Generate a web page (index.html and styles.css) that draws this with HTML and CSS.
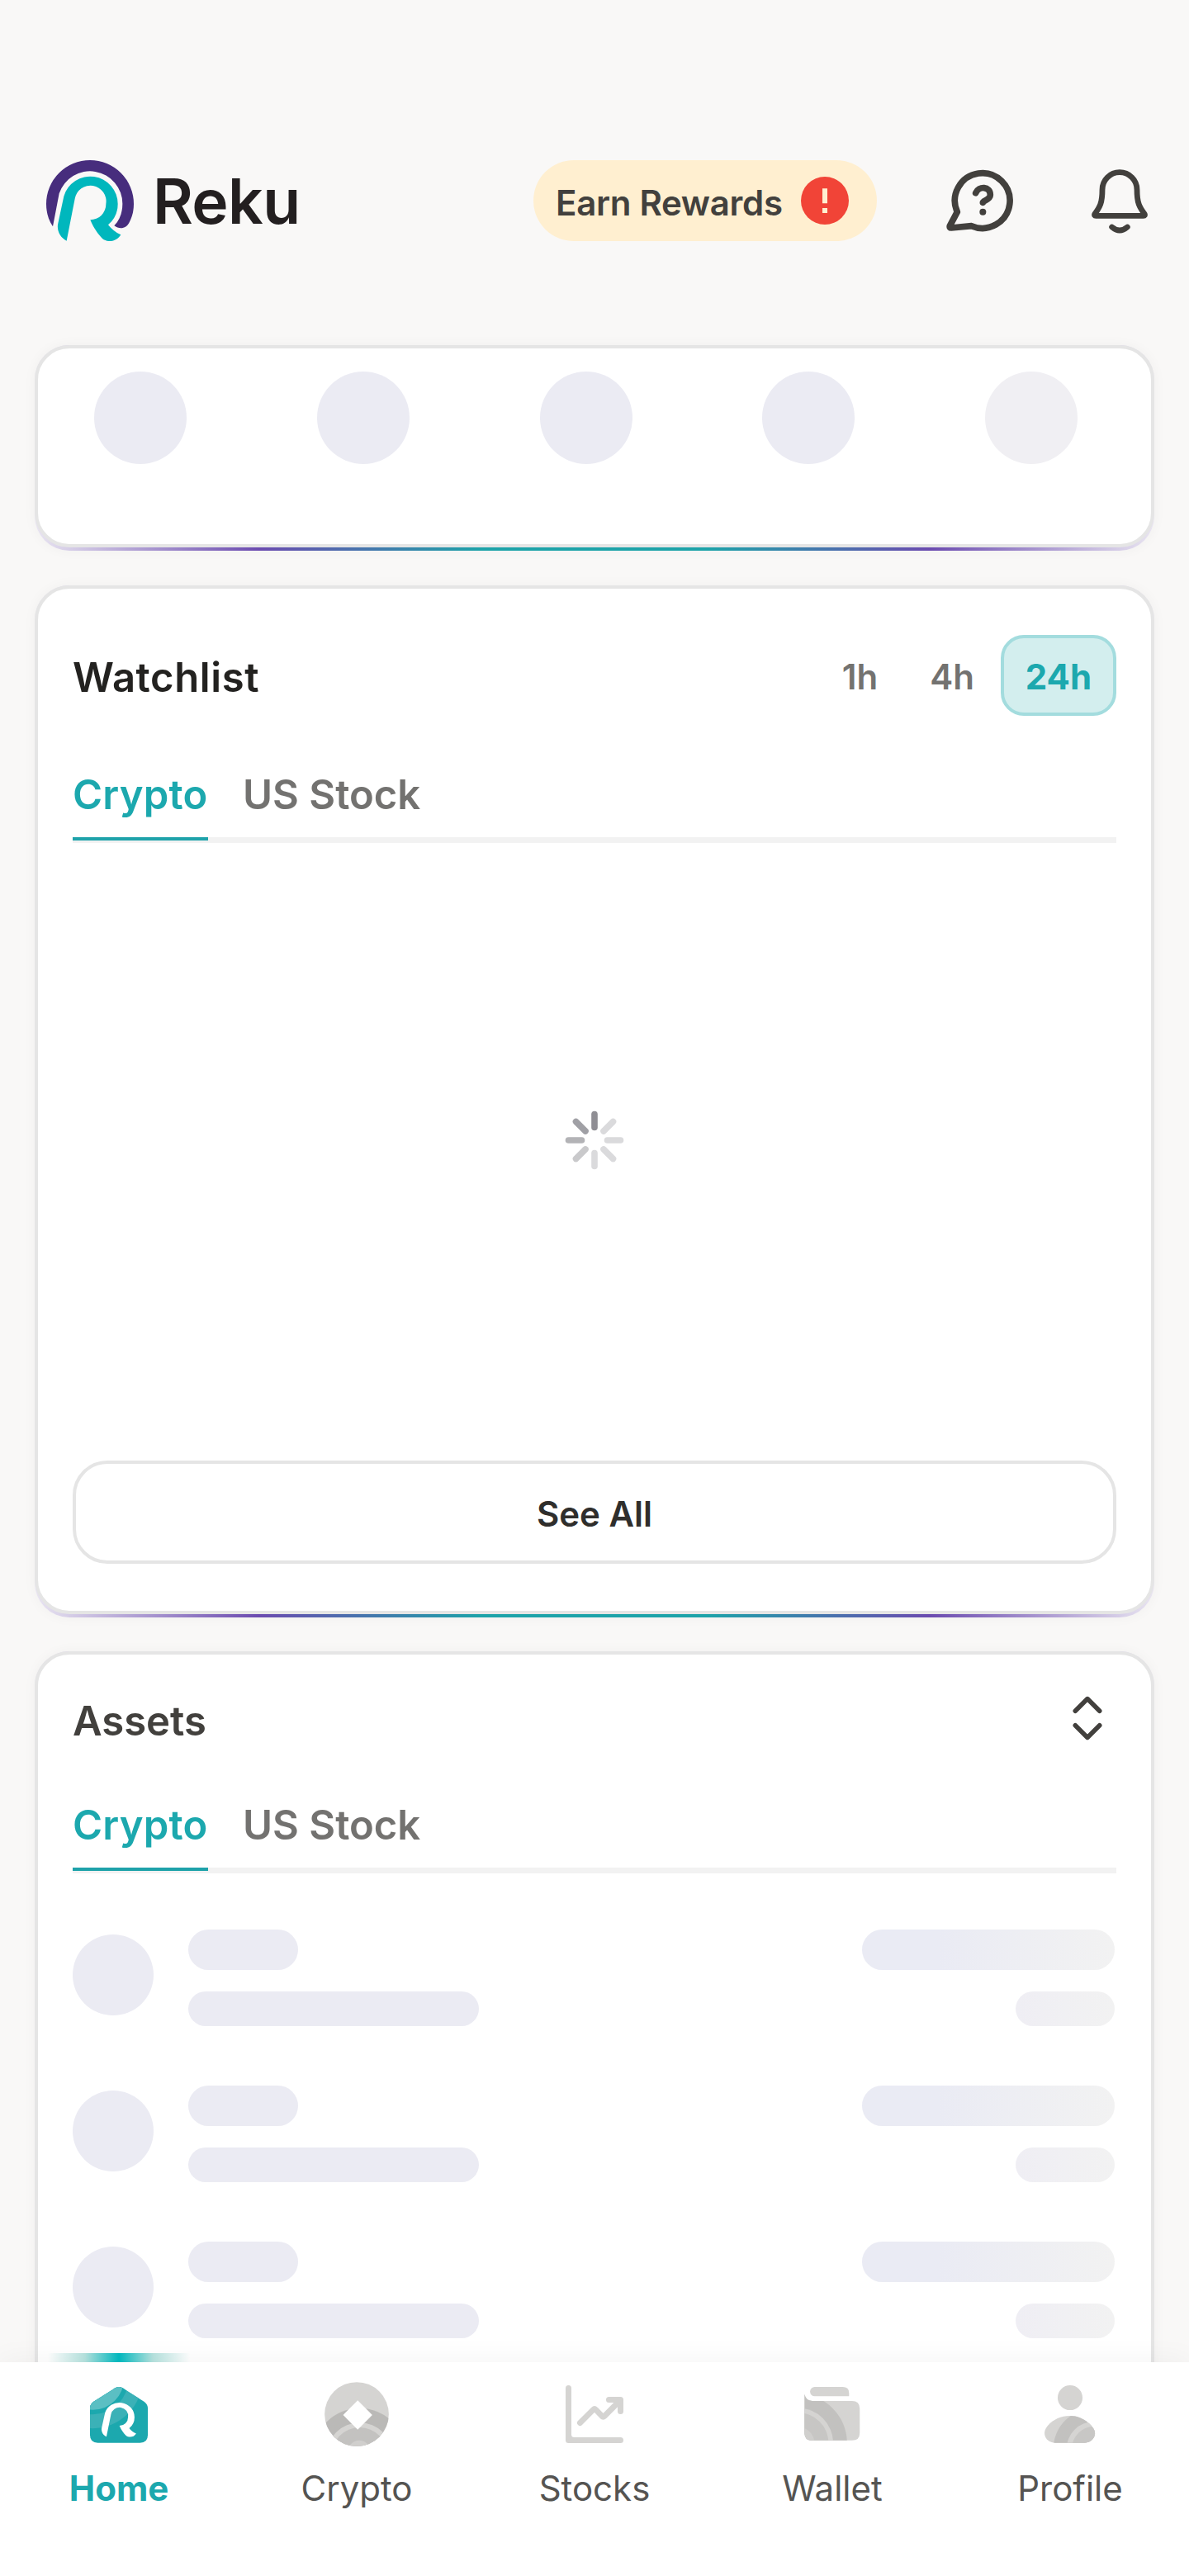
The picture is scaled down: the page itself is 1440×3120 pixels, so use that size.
FILE: index.html
```html
<!DOCTYPE html>
<html lang="en">
<head>
<meta charset="utf-8">
<title>Reku</title>
<link rel="stylesheet" href="styles.css">
</head>
<body>
<div class="app">
  <main class="screen">
    <header class="topbar">
      <div class="brand">
        <svg class="brand-mark" viewBox="78 72 318 294">
          <path fill="#472d7d" d="M102 313C85 288 78 260 78 231A159 159 0 0 1 396 231C396 255 391 277 380 298C370 320 345 326 325 310C345 290 355 262 355 231A118 118 0 0 0 125 193Z"/>
          <path fill="#00b7bd" d="M152 365L182 212A57 57 0 0 1 295 231A57 57 0 0 1 238 289C252 322 266 340 282 357C300 371 332 371 349 343C330 335 314 322 303 307A100 100 0 0 0 338 231A100 100 0 0 0 142 203L120 306C117 332 130 353 152 365Z"/>
        </svg>
        <span class="brand-name">Reku</span>
      </div>
      <div class="actions">
        <div class="rewards"><span class="rewards-label">Earn Rewards</span>
          <svg class="alert" viewBox="0 0 58 58"><circle cx="29" cy="29" r="29" fill="#f14437"/><path fill="#ffefd0" d="M26 14.3h6v18h-6zM26 38h6v6h-6z"/></svg>
        </div>
        <svg class="icon help" viewBox="135 90 252 252" fill="none" stroke="#42403d" stroke-width="23" stroke-linecap="round" stroke-linejoin="round">
          <path d="M230 308A100 100 0 1 0 178 257L151 308Q149 315 156 315Z"/>
          <path d="M245 188C256 162 298 163 298 195C298 213 271 216 271 223"/>
          <circle cx="271" cy="257" r="12" fill="#42403d" stroke="none"/>
        </svg>
        <svg class="icon bell" viewBox="642 90 252 252" fill="none" stroke="#42403d" stroke-width="20.5" stroke-linecap="round" stroke-linejoin="round">
          <path d="M768 113A63 63 0 0 0 705 176C705 225 696 239 678 264Q674 271 682 271H854Q862 271 858 264C840 239 831 225 831 176A63 63 0 0 0 768 113Z"/>
          <path d="M740 312Q768 336 796 312"/>
        </svg>
      </div>
    </header>

    <section class="frame">
      <div class="card shortcuts"><i></i><i></i><i></i><i></i><i class="fade"></i></div>
    </section>

    <section class="frame">
      <div class="card watchlist">
        <div class="card-head">
          <h2 class="title wide">Watchlist</h2>
          <div class="ranges"><span class="range r1">1h</span><span class="range r4">4h</span><span class="range active">24h</span></div>
        </div>
        <nav class="tabs"><span class="tab on">Crypto</span><span class="tab">US Stock</span></nav>
        <div class="loading">
          <svg class="spinner" viewBox="-36 -36 72 72" stroke-width="7.6" stroke-linecap="round">
            <path stroke="#8f8e94" d="M0-31.5V-15.5"/>
            <path stroke="#dadadc" d="M22.5-22.5L11-11"/>
            <path stroke="#dadadc" d="M31.5 0H15.5"/>
            <path stroke="#dadadc" d="M22.5 22.5L11 11"/>
            <path stroke="#dadadc" d="M0 31.5V15.5"/>
            <path stroke="#c9c9cb" d="M-22.5 22.5L-11 11"/>
            <path stroke="#b3b3b6" d="M-31.5 0H-15.5"/>
            <path stroke="#a0a0a5" d="M-22.5-22.5L-11-11"/>
          </svg>
        </div>
        <div class="see-all">See All</div>
      </div>
    </section>

    <section class="frame">
      <div class="card assets">
        <div class="card-head">
          <h2 class="title soft">Assets</h2>
          <svg class="sort" viewBox="0 0 70 70" fill="none" stroke="#42403d" stroke-width="5.6" stroke-linecap="round" stroke-linejoin="round"><path d="M20.3 26.3L35 11.6L49.7 26.3M20.3 43.7L35 58.4L49.7 43.7"/></svg>
        </div>
        <nav class="tabs"><span class="tab on">Crypto</span><span class="tab">US Stock</span></nav>
        <div class="rows">
          <div class="row"><i class="coin"></i><div class="left"><i class="bar a"></i><i class="bar b"></i></div><div class="right"><i class="bar c"></i><i class="bar d"></i></div></div>
          <div class="row"><i class="coin"></i><div class="left"><i class="bar a"></i><i class="bar b"></i></div><div class="right"><i class="bar c"></i><i class="bar d"></i></div></div>
          <div class="row"><i class="coin"></i><div class="left"><i class="bar a"></i><i class="bar b"></i></div><div class="right"><i class="bar c"></i><i class="bar d"></i></div></div>
        </div>
      </div>
    </section>
  </main>

  <footer class="bottom-nav">
    <div class="nav-item current">
      <svg class="nav-icon" viewBox="0 0 24 24">
        <clipPath id="house"><path d="M2 10Q2 8.6 3.2 7.7L10.8 2.9Q12 2.2 13.2 2.9L20.8 7.7Q22 8.6 22 10V19.2Q22 21.9 19.3 21.9H4.7Q2 21.9 2 19.2Z"/></clipPath>
        <g clip-path="url(#house)"><path fill="#1ca8ae" d="M0 0h24v24H0z"/><circle cx="3" cy="-.2" r="17.1" fill="#3bb1b7"/><circle cx="3" cy="-.2" r="12.3" fill="#1ca8ae"/><circle cx="3" cy="-.2" r="10.7" fill="#5bbfc3"/></g>
        <path fill="#fff" transform="translate(-.24 1.385) scale(.0522 .0505)" d="M152 365L182 212A57 57 0 0 1 295 231A57 57 0 0 1 238 289C252 322 266 340 282 357C300 371 332 371 349 343C330 335 314 322 303 307A100 100 0 0 0 338 231A100 100 0 0 0 142 203L120 306C117 332 130 353 152 365Z"/>
      </svg>
      <span>Home</span>
    </div>
    <div class="nav-item">
      <svg class="nav-icon" viewBox="0 0 24 24">
        <clipPath id="disc"><circle cx="12" cy="12" r="11.1"/></clipPath>
        <g clip-path="url(#disc)"><path fill="#d5d4d2" d="M0 0h24v24H0z"/><circle cx="13" cy="26" r="16.1" fill="#bab9b7"/><circle cx="13" cy="26.4" r="11.5" fill="#d5d4d2"/><circle cx="13" cy="26.4" r="9.8" fill="#c3c2c0"/><circle cx="12.9" cy="25" r="3.9" fill="#d0cfcd"/></g>
        <path fill="#fff" d="M12.35 7.2L17.4 12.3L12.35 17.35L7.3 12.3Z"/>
      </svg>
      <span>Crypto</span>
    </div>
    <div class="nav-item">
      <svg class="nav-icon" viewBox="0 0 24 24" fill="none" stroke="#d5d4d2" stroke-width="2" stroke-linecap="round" stroke-linejoin="round">
        <path d="M3 3V21H21"/><path stroke="none" fill="#d5d4d2" d="M4 19Q4 20 5 20H4z"/>
        <path d="M7 15L11.6 10.4Q12 10 12.4 10.4L14.6 12.7Q15 13.1 15.4 12.7L20.8 7.3M17 7H21V11"/>
      </svg>
      <span>Stocks</span>
    </div>
    <div class="nav-item">
      <svg class="nav-icon" viewBox="0 0 24 24">
        <clipPath id="purse"><path d="M2.4 5.1Q2.8 7.4 5.1 7.4H18.8Q21.5 7.4 21.5 10.1V18.4Q21.5 21.1 18.8 21.1H5.1Q2.4 21.1 2.4 18.4Z"/></clipPath>
        <path fill="#d5d4d2" d="M5.9 2.6H15.6Q17.8 2.6 17.8 4.7V5.8H5.9A1.6 1.6 0 0 1 5.9 2.6Z"/>
        <g clip-path="url(#purse)"><path fill="#d5d4d2" d="M0 0h24v24H0z"/><circle cx="0" cy="22" r="17.1" fill="#c2c1bf"/><circle cx=".2" cy="22" r="12.1" fill="#d5d4d2"/><circle cx=".2" cy="22" r="10.5" fill="#c7c6c4"/><circle cx=".2" cy="22" r="5.6" fill="#d0cfcd"/></g>
      </svg>
      <span>Wallet</span>
    </div>
    <div class="nav-item">
      <svg class="nav-icon" viewBox="0 0 24 24">
        <clipPath id="torso"><path d="M6.9 21.9C4.7 21.9 3.15 20.4 3.15 18.5C3.15 16 7 12.6 12 12.6C16.8 12.6 20.6 16.6 20.6 18.6C20.6 20.5 18.9 21.9 17 21.9Z"/></clipPath>
        <circle cx="12" cy="6.3" r="4.3" fill="#d5d4d2"/>
        <g clip-path="url(#torso)"><path fill="#d5d4d2" d="M0 0h24v24H0z"/><circle cx="20" cy="24" r="13.8" fill="#c2c1bf"/><circle cx="20.2" cy="24" r="9.4" fill="#d5d4d2"/><circle cx="20.4" cy="24" r="7.8" fill="#c8c7c5"/></g>
      </svg>
      <span>Profile</span>
    </div>
  </footer>
</div>
</body>
</html>
```
FILE: styles.css
```css
* { box-sizing: border-box; }
body { margin: 0; background: #f9f8f7; font-family: Inter, "Liberation Sans", sans-serif; font-weight: 600; }
svg { display: block; flex: none; }
.app { width: 1440px; height: 3120px; display: flex; flex-direction: column; overflow: hidden; }
.screen { height: 2861px; flex: none; overflow: hidden; display: flex; flex-direction: column; gap: 41.5px; }
.screen > * { flex: none; }

.topbar { display: flex; justify-content: space-between; height: 376.5px; padding: 194px 42px 0 56px; }
.brand { display: flex; gap: 23px; height: 98px; }
.brand-mark { width: 106px; height: 98px; }
.brand-name { font-size: 75px; line-height: 98px; padding-top: 1px; letter-spacing: -.6px; color: #231f20; }
.actions { display: flex; align-items: center; height: 98px; }
.rewards { display: flex; align-items: center; justify-content: space-between; width: 416px; height: 98px; padding: 0 34px 0 27px; border-radius: 49px; background: #ffefd0; }
.rewards-label { font-size: 42px; line-height: 60px; padding-top: 5px; letter-spacing: -.3px; color: #42403d; white-space: nowrap; }
.alert { width: 58px; height: 58px; }
.icon { width: 84px; height: 84px; }
.help { margin-left: 83px; }
.bell { margin-left: 85px; }

.frame { margin: 0 42px; padding-bottom: 4px; border-radius: 42px; background: linear-gradient(90deg, #e9e5f1 0, #6b4bb0 20%, #1ca3a9 40%, #1ca3a9 60%, #6b4bb0 80%, #e9e5f1 100%); box-shadow: 0 0 16px rgba(60, 40, 20, .04); }
.card { border: 4px solid #e5e5e5; border-radius: 42px; background: #fff; padding: 0 42px; }
.shortcuts { height: 245px; padding: 28px 0 0 68px; display: grid; grid-template-columns: repeat(5, 269.8px); }
.shortcuts i { width: 112px; height: 112px; border-radius: 50%; background: #ebebf3; }
.shortcuts .fade { background: #f0eff3; }
.card-head { display: flex; align-items: center; justify-content: space-between; height: 98px; }
.title { margin: 0; padding-top: 6px; font-size: 49px; font-weight: 600; line-height: 60px; color: #232220; }
.title.wide { letter-spacing: .6px; }
.title.soft { padding-top: 7px; color: #42403d; }
.watchlist { height: 1246px; padding-top: 56px; }
.ranges { display: flex; align-items: center; }
.range { font-size: 42px; line-height: 60px; padding-top: 5px; color: #737270; }
.r1 { margin-right: 63px; }
.r4 { margin-right: 32px; }
.range.active { width: 140px; height: 98px; padding-top: 17px; text-align: center; font-weight: 700; color: #1ca8ae; background: #d3eeee; border: 4px solid #a3dcde; border-radius: 28px; }
.tabs { display: flex; gap: 42px; margin-top: 61px; height: 93px; border-bottom: 7px solid #f2f2f2; font-size: 49px; line-height: 70px; color: #737270; }
.tab { height: 90px; white-space: nowrap; }
.tab.on { width: 164px; letter-spacing: .2px; color: #1ca8ae; border-bottom: 4px solid #1ea2aa; }
.loading { display: flex; align-items: center; justify-content: center; height: 721px; }
.spinner { width: 72px; height: 72px; }
.see-all { margin-top: 27.5px; height: 125px; border: 4px solid #e5e5e5; border-radius: 42px; text-align: center; font-size: 42px; line-height: 122px; color: #2f2e2c; }

.assets { padding-top: 28px; height: 900px; }
.sort { width: 70px; height: 70px; }
.assets .tabs { margin-top: 46px; }
.rows { display: flex; flex-direction: column; gap: 71px; padding: 67.5px 2px 0 0; }
.row { display: flex; height: 118px; }
.coin { width: 98px; height: 98px; margin-top: 6px; border-radius: 50%; background: #ebebf3; }
.left, .right { display: flex; flex-direction: column; gap: 26.5px; }
.left { margin-left: 42px; }
.right { margin-left: auto; align-items: flex-end; }
.bar { height: 42px; border-radius: 25px; background: #ebebf3; }
.a { width: 133px; height: 49px; }
.b { width: 352px; }
.c { width: 306px; height: 49px; background: linear-gradient(90deg, #eaebf4 30%, #f2f2f2); }
.d { width: 120px; background: linear-gradient(90deg, #efeef4, #f2f2f2); }

.bottom-nav { position: relative; flex: none; display: grid; grid-template-columns: repeat(5, 1fr); height: 259px; padding-top: 21px; background: #fff; box-shadow: 0 0 35px rgba(0, 0, 0, .05); }
.bottom-nav::before { content: ""; position: absolute; left: 58px; top: -11px; width: 172px; height: 11px; background: linear-gradient(90deg, rgba(0,183,189,0), rgba(70,180,170,.4) 26%, #00b7bd 50%, rgba(70,180,170,.4) 74%, rgba(0,183,189,0)); }
.nav-item { display: flex; flex-direction: column; align-items: center; font-size: 42px; line-height: 60px; font-weight: 400; color: #555452; }
.nav-icon { width: 84px; height: 84px; margin-bottom: 18px; }
.current { color: #1ca8ae; font-weight: 700; }
```
